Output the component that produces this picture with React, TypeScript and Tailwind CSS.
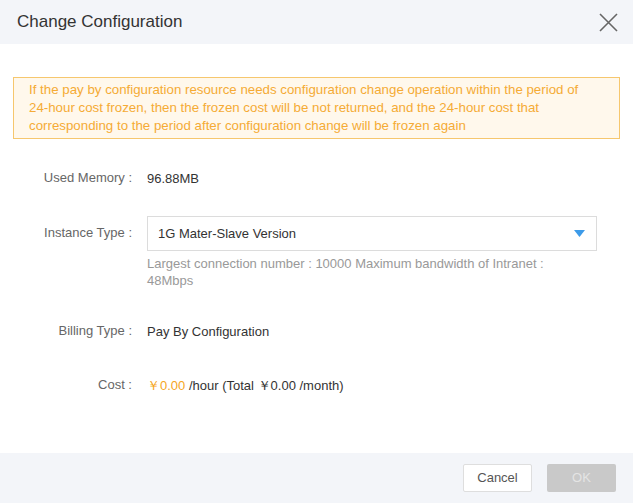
import React from 'react';

const font = { fontFamily: '"Liberation Sans", Arial, sans-serif' };

function Row({ label, children, alignTop = false }: { label: string; children: React.ReactNode; alignTop?: boolean }) {
  return (
    <div className={`flex ${alignTop ? 'items-start' : 'items-center'}`}>
      <div className={`w-[120px] shrink-0 text-right text-[13px] leading-[18px] text-[#666] pr-[1px] ${alignTop ? 'pt-[8px]' : ''}`}>
        {label}
      </div>
      <div className="ml-[14px] flex-1">{children}</div>
    </div>
  );
}

export default function App() {
  return (
    <div className="w-[633px] h-[503px] flex flex-col bg-white" style={font}>
      <div className="h-[44px] shrink-0 bg-[#f3f5f9] flex items-center justify-between pl-[17px] pr-[15px]">
        <span className="text-[17px] text-[#333]">Change Configuration</span>
        <button className="w-[20px] h-[20px] flex items-center justify-center">
          <svg width="19" height="19" viewBox="0 0 19 19">
            <path d="M1 1 L18 18 M18 1 L1 18" stroke="#666" strokeWidth="1.6" fill="none" />
          </svg>
        </button>
      </div>

      <div className="flex-1 px-[13px] pt-[33px]">
        <div className="border border-[#f6c76e] bg-[#fff8ec] px-[15px] py-[3px] text-[13.3px] leading-[18px] text-[#f5ab35]">
          If the pay by configuration resource needs configuration change operation within the period of{' '}
          <span className="whitespace-nowrap">24-hour</span> cost frozen, then the frozen cost will be not returned, and the{' '}
          <span className="whitespace-nowrap">24-hour</span> cost that corresponding to the period after configuration change will be frozen again
        </div>

        <div className="mt-[27px] flex flex-col">
          <Row label="Used Memory :">
            <span className="text-[13px] leading-[18px] text-[#333]">96.88MB</span>
          </Row>

          <div className="mt-[26px]">
            <Row label="Instance Type :" alignTop>
              <div className="w-[450px]">
                <div className="h-[35px] border border-[#dcdcdc] flex items-center justify-between pl-[10px] pr-[11px]">
                  <span className="text-[13px] text-[#333]">1G Mater-Slave Version</span>
                  <svg width="11" height="7" viewBox="0 0 11 7">
                    <path d="M0 0 L11 0 L5.5 7 Z" fill="#3d9be9" />
                  </svg>
                </div>
                <div className="mt-[4px] w-[410px] text-[13px] leading-[17px] text-[#999]">
                  Largest connection number : 10000 Maximum bandwidth of Intranet : 48Mbps
                </div>
              </div>
            </Row>
          </div>

          <div className="mt-[30px]">
            <Row label="Billing Type :">
              <span className="text-[13px] leading-[18px] text-[#333]">Pay By Configuration</span>
            </Row>
          </div>

          <div className="mt-[30px]">
            <Row label="Cost :">
              <span className="text-[13px] leading-[18px] text-[#333]">
                <span className="text-[#f5a623]">￥0.00</span> /hour (Total ￥0.00 /month)
              </span>
            </Row>
          </div>
        </div>
      </div>

      <div className="h-[50px] shrink-0 bg-[#f3f5f9] flex items-center justify-end gap-[15px] pr-[17px]">
        <button className="w-[69px] h-[28px] bg-white border border-[#dedede] rounded-[2px] text-[13px] text-[#555]">
          Cancel
        </button>
        <button className="w-[69px] h-[28px] bg-[#c9c9c9] rounded-[2px] text-[13px] text-[#e4e4e4]">OK</button>
      </div>
    </div>
  );
}
